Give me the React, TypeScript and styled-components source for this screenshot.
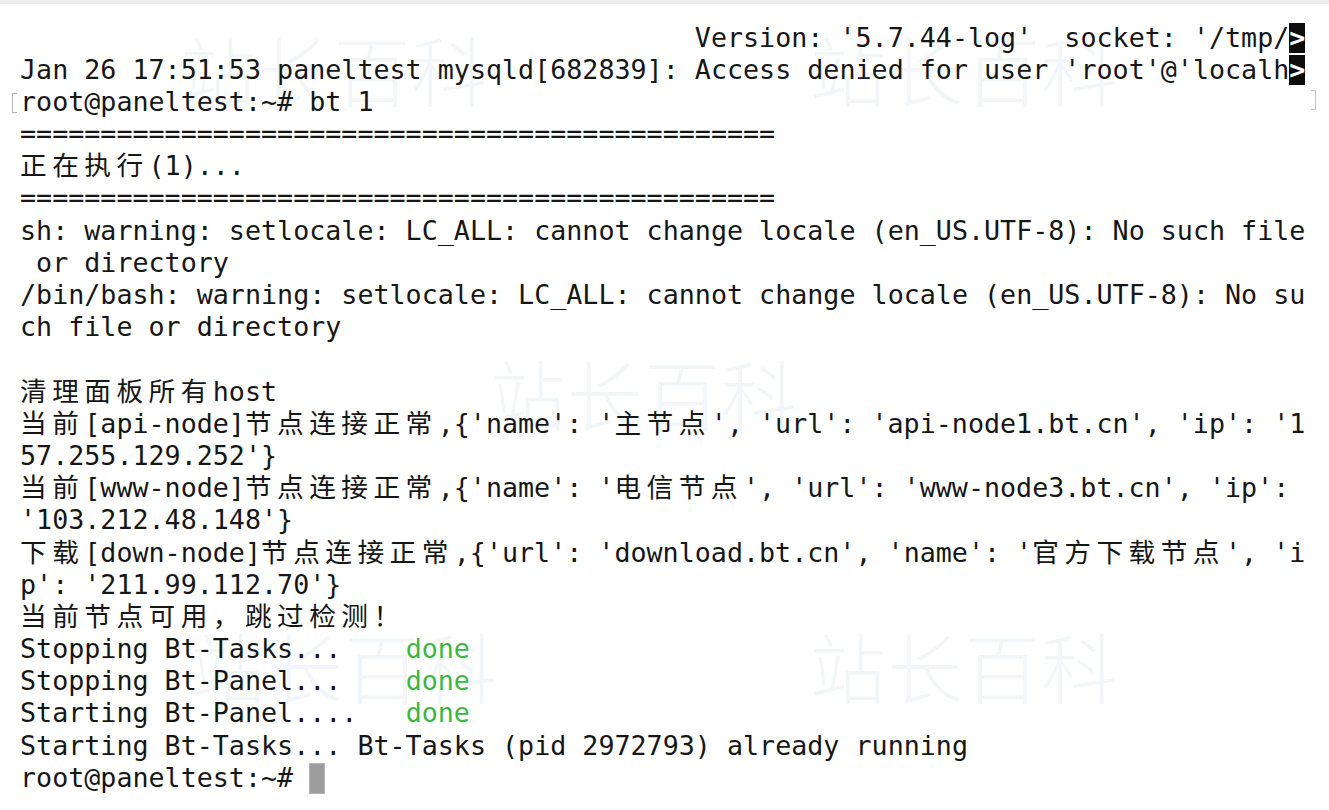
import React from "react";
import styled, { createGlobalStyle } from "styled-components";

const GlobalStyle = createGlobalStyle`
  html, body {
    margin: 0;
    padding: 0;
    background: #ffffff;
  }
  body {
    font-family: "DejaVu Sans Mono", "Noto Sans CJK SC", monospace;
  }
`;

const Window = styled.div`
  position: relative;
  width: 1329px;
  height: 810px;
  overflow: hidden;
  background: #ffffff;
  border-top: 4px solid #ececec;
  box-sizing: border-box;
`;

const Screen = styled.div`
  position: relative;
  z-index: 1;
  padding: 17.5px 0 0 20px;
  font-family: "DejaVu Sans Mono", "Noto Sans CJK SC", monospace;
  font-size: 26.7px;
  color: #161616;
`;

const Line = styled.div<{ $mark?: boolean }>`
  position: relative;
  height: 32.2px;
  line-height: 32.2px;
  white-space: pre;

  ${(p) =>
    p.$mark &&
    `
    &::before {
      content: "";
      position: absolute;
      left: -8px;
      top: 7px;
      width: 4px;
      height: 18px;
      border: 1.5px solid #b4b4b4;
      border-right: none;
    }
    &::after {
      content: "";
      position: absolute;
      left: 1291px;
      top: 4px;
      width: 4px;
      height: 18px;
      border: 1.5px solid #c4c4c4;
      border-left: none;
    }
  `}
`;

const Wide = styled.span`
  display: inline-block;
  width: 2ch;
  height: 32.2px;
  line-height: 32.2px;
  vertical-align: top;
  font-family: "DejaVu Sans Mono", "Noto Sans CJK SC", monospace;
`;

const Green = styled.span`
  color: #3fb63f;
`;

const MoreMark = styled.span`
  display: inline-block;
  width: 1ch;
  height: 30px;
  line-height: 30px;
  vertical-align: top;
  margin-top: 1px;
  background: #0c0c0c;
  color: #ffffff;
  font-weight: bold;
  text-align: center;
`;

const Cursor = styled.span`
  display: inline-block;
  width: 1ch;
  height: 31px;
  vertical-align: top;
  margin-top: 1px;
  background: #9d9d9d;
  box-shadow: inset 0 0 0 1px #b5b5b5;
`;

const Watermark = styled.div<{ $x: number; $y: number }>`
  position: absolute;
  left: ${(p) => p.$x}px;
  top: ${(p) => p.$y}px;
  z-index: 0;
  font-family: "Noto Sans CJK SC", sans-serif;
  font-weight: 300;
  font-size: 76px;
  line-height: 1;
  letter-spacing: 1px;
  color: #f3f6f8;
  white-space: nowrap;
  user-select: none;
`;

const WIDE_RE = /[\u3000-\u9fff\uff00-\uffef]/;

function renderText(text: string, keyBase: string) {
  const out: React.ReactNode[] = [];
  let buf = "";
  let i = 0;
  for (const ch of text) {
    if (WIDE_RE.test(ch)) {
      if (buf) {
        out.push(buf);
        buf = "";
      }
      out.push(<Wide key={`${keyBase}-${i}`}>{ch}</Wide>);
    } else {
      buf += ch;
    }
    i++;
  }
  if (buf) out.push(buf);
  return out;
}

type Seg = { t: string; green?: boolean };
type LineData = {
  segs: Seg[];
  more?: boolean;
  cursor?: boolean;
  mark?: boolean;
};

const eq = "=".repeat(47);

const lines: LineData[] = [
  {
    segs: [{ t: " ".repeat(42) + "Version: '5.7.44-log'  socket: '/tmp/" }],
    more: true,
  },
  {
    segs: [
      {
        t: "Jan 26 17:51:53 paneltest mysqld[682839]: Access denied for user 'root'@'localh",
      },
    ],
    more: true,
  },
  { segs: [{ t: "root@paneltest:~# bt 1" }], mark: true },
  { segs: [{ t: eq }] },
  { segs: [{ t: "正在执行(1)..." }] },
  { segs: [{ t: eq }] },
  {
    segs: [
      {
        t: "sh: warning: setlocale: LC_ALL: cannot change locale (en_US.UTF-8): No such file",
      },
    ],
  },
  { segs: [{ t: " or directory" }] },
  {
    segs: [
      {
        t: "/bin/bash: warning: setlocale: LC_ALL: cannot change locale (en_US.UTF-8): No su",
      },
    ],
  },
  { segs: [{ t: "ch file or directory" }] },
  { segs: [{ t: "" }] },
  { segs: [{ t: "清理面板所有host" }] },
  {
    segs: [
      {
        t: "当前[api-node]节点连接正常,{'name': '主节点', 'url': 'api-node1.bt.cn', 'ip': '1",
      },
    ],
  },
  { segs: [{ t: "57.255.129.252'}" }] },
  {
    segs: [
      {
        t: "当前[www-node]节点连接正常,{'name': '电信节点', 'url': 'www-node3.bt.cn', 'ip':",
      },
    ],
  },
  { segs: [{ t: "'103.212.48.148'}" }] },
  {
    segs: [
      {
        t: "下载[down-node]节点连接正常,{'url': 'download.bt.cn', 'name': '官方下载节点', 'i",
      },
    ],
  },
  { segs: [{ t: "p': '211.99.112.70'}" }] },
  { segs: [{ t: "当前节点可用，跳过检测！" }] },
  { segs: [{ t: "Stopping Bt-Tasks...    " }, { t: "done", green: true }] },
  { segs: [{ t: "Stopping Bt-Panel...    " }, { t: "done", green: true }] },
  { segs: [{ t: "Starting Bt-Panel....   " }, { t: "done", green: true }] },
  {
    segs: [
      { t: "Starting Bt-Tasks... Bt-Tasks (pid 2972793) already running" },
    ],
  },
  { segs: [{ t: "root@paneltest:~# " }], cursor: true },
];

const marks: Array<[number, number]> = [
  [180, 26],
  [810, 26],
  [490, 350],
  [190, 623],
  [810, 623],
];

export default function App() {
  return (
    <>
      <GlobalStyle />
      <Window>
        {marks.map(([x, y], i) => (
          <Watermark key={i} $x={x} $y={y}>
            站长百科
          </Watermark>
        ))}
        <Screen>
          {lines.map((ln, li) => (
            <Line key={li} $mark={ln.mark}>
              {ln.segs.map((s, si) =>
                s.green ? (
                  <Green key={si}>{renderText(s.t, `${li}-${si}`)}</Green>
                ) : (
                  <React.Fragment key={si}>
                    {renderText(s.t, `${li}-${si}`)}
                  </React.Fragment>
                )
              )}
              {ln.more && <MoreMark>&gt;</MoreMark>}
              {ln.cursor && <Cursor />}
            </Line>
          ))}
        </Screen>
      </Window>
    </>
  );
}
